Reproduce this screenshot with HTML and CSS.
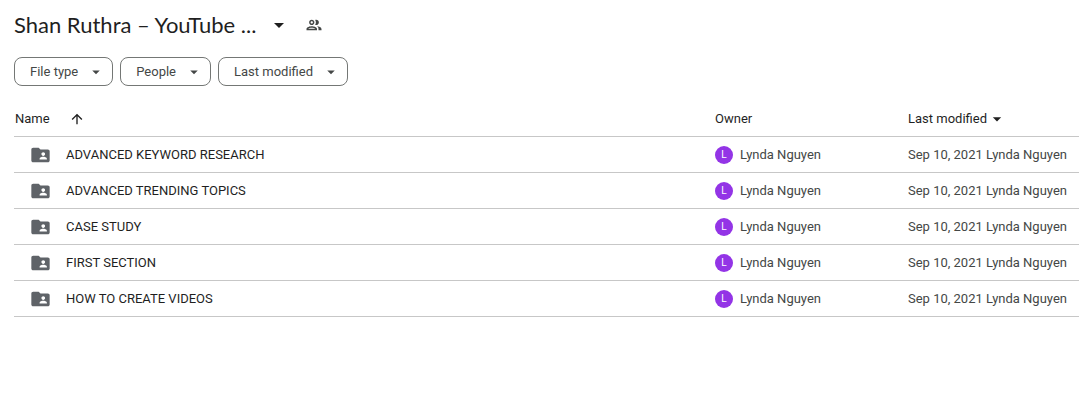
FILE: index.html
```
<!DOCTYPE html>
<html lang="en">
<head>
    <meta charset="UTF-8">
    <meta name="viewport" content="width=device-width, initial-scale=1.0">
    <title>Shan Ruthra – YouTube ...</title>
    <link rel="stylesheet" href="styles.css">
</head>
<body>
    <!-- Shared icons -->
    <svg class="sprite" aria-hidden="true">
        <symbol id="icon-caret" viewBox="0 0 24 24"><path d="M7 10l5 5 5-5z"/></symbol>
        <symbol id="icon-people" viewBox="0 0 24 24"><path d="M9 13.75c-2.34 0-7 1.17-7 3.5V19h14v-1.75c0-2.33-4.66-3.5-7-3.5zM4.34 17c.84-.58 2.87-1.25 4.66-1.25s3.82.67 4.66 1.25H4.34zM9 12c1.93 0 3.5-1.57 3.5-3.5S10.93 5 9 5 5.5 6.57 5.5 8.5 7.07 12 9 12zm0-5c.83 0 1.5.67 1.5 1.5S9.83 10 9 10s-1.5-.67-1.5-1.5S8.17 7 9 7zm7.04 6.81c1.16.84 1.96 1.96 1.96 3.44V19h4v-1.75c0-2.02-3.5-3.17-5.96-3.44zM15 12c1.93 0 3.5-1.57 3.5-3.5S16.93 5 15 5c-.54 0-1.04.13-1.5.35.63.89 1 1.98 1 3.15s-.37 2.26-1 3.15c.46.22.96.35 1.5.35z"/></symbol>
        <symbol id="icon-arrow-up" viewBox="0 0 24 24"><path d="M4 12l1.41 1.41L11 7.83V20h2V7.83l5.58 5.59L20 12l-8-8-8 8z"/></symbol>
        <symbol id="icon-folder" viewBox="0 0 24 24"><path d="M20 6h-8l-2-2H4c-1.1 0-1.99.9-1.99 2L2 18c0 1.1.9 2 2 2h16c1.1 0 2-.9 2-2V8c0-1.1-.9-2-2-2zm-5 3c1.1 0 2 .9 2 2s-.9 2-2 2-2-.9-2-2 .9-2 2-2zm4 8h-8v-1c0-1.33 2.67-2 4-2s4 .67 4 2v1z"/></symbol>
    </svg>

    <header class="title-bar">
        <h1>Shan Ruthra – YouTube ...</h1>
        <button class="icon-button" aria-label="Folder actions"><svg class="icon icon-large"><use href="#icon-caret"/></svg></button>
        <button class="icon-button" aria-label="Manage access"><svg class="icon icon-muted"><use href="#icon-people"/></svg></button>
    </header>

    <div class="filters">
        <button class="chip">File type <svg class="icon"><use href="#icon-caret"/></svg></button>
        <button class="chip">People <svg class="icon"><use href="#icon-caret"/></svg></button>
        <button class="chip">Last modified <svg class="icon"><use href="#icon-caret"/></svg></button>
    </div>

    <table class="files">
        <thead>
            <tr>
                <th class="col-name"><div class="heading">Name <button class="icon-button sort" aria-label="Reverse sort direction"><svg class="icon icon-small"><use href="#icon-arrow-up"/></svg></button></div></th>
                <th class="col-owner">Owner</th>
                <th class="col-modified"><button class="heading">Last modified <svg class="icon modified-caret"><use href="#icon-caret"/></svg></button></th>
            </tr>
        </thead>
        <tbody>
            <tr>
                <td><div class="file"><svg class="icon folder"><use href="#icon-folder"/></svg>ADVANCED KEYWORD RESEARCH</div></td>
                <td><div class="owner"><span class="avatar">L</span>Lynda Nguyen</div></td>
                <td>Sep 10, 2021 Lynda Nguyen</td>
            </tr>
            <tr>
                <td><div class="file"><svg class="icon folder"><use href="#icon-folder"/></svg>ADVANCED TRENDING TOPICS</div></td>
                <td><div class="owner"><span class="avatar">L</span>Lynda Nguyen</div></td>
                <td>Sep 10, 2021 Lynda Nguyen</td>
            </tr>
            <tr>
                <td><div class="file"><svg class="icon folder"><use href="#icon-folder"/></svg>CASE STUDY</div></td>
                <td><div class="owner"><span class="avatar">L</span>Lynda Nguyen</div></td>
                <td>Sep 10, 2021 Lynda Nguyen</td>
            </tr>
            <tr>
                <td><div class="file"><svg class="icon folder"><use href="#icon-folder"/></svg>FIRST SECTION</div></td>
                <td><div class="owner"><span class="avatar">L</span>Lynda Nguyen</div></td>
                <td>Sep 10, 2021 Lynda Nguyen</td>
            </tr>
            <tr>
                <td><div class="file"><svg class="icon folder"><use href="#icon-folder"/></svg>HOW TO CREATE VIDEOS</div></td>
                <td><div class="owner"><span class="avatar">L</span>Lynda Nguyen</div></td>
                <td>Sep 10, 2021 Lynda Nguyen</td>
            </tr>
        </tbody>
    </table>
</body>
</html>
```
FILE: styles.css
```
* {
    box-sizing: border-box;
}
body {
    margin: 0;
    padding: 10px 0 0 14px;
    font-family: Roboto, sans-serif;
    font-size: 13px;
    line-height: 20px;
    color: #1f1f1f;
    background: #fff;
}
button {
    padding: 0;
    border: 0;
    background: none;
    color: inherit;
    font: inherit;
    cursor: pointer;
}
.sprite {
    display: none;
}
.icon {
    display: block;
    flex: none;
    width: 18px;
    height: 18px;
    fill: currentColor;
}
.icon-small {
    width: 16px;
    height: 16px;
}
.icon-large {
    width: 24px;
    height: 24px;
}
.icon-muted {
    color: #444746;
}
.title-bar {
    display: flex;
    align-items: center;
    height: 30px;
}
.title-bar h1 {
    margin: 0 11px 0 0;
    font-family: Lato, sans-serif;
    font-size: 22px;
    line-height: 28px;
    font-weight: 400;
}
.title-bar .icon-button + .icon-button {
    margin-left: 14px;
}
.filters {
    display: flex;
    gap: 7px;
    margin-top: 17px;
}
.chip {
    display: flex;
    align-items: center;
    gap: 9px;
    height: 29px;
    padding: 0 7px 0 15px;
    border: 1px solid #747775;
    border-radius: 8px;
    color: #444746;
}
.files {
    width: 100%;
    margin-top: 14px;
    border-collapse: collapse;
    table-layout: fixed;
}
.files th,
.files td {
    height: 36px;
    padding: 1px 0 0 1px;
    border-bottom: 1px solid #c7c7c7;
    text-align: left;
    white-space: nowrap;
}
.files th {
    padding-top: 2px;
    font-weight: 400;
}
.files td {
    color: #444746;
}
.col-owner {
    width: 193px;
}
.col-modified {
    width: 172px;
}
.heading {
    display: flex;
    align-items: center;
}
.sort {
    margin-left: 19px;
}
.modified-caret {
    width: 20px;
    height: 20px;
}
.file {
    display: flex;
    align-items: center;
    gap: 14px;
    padding-left: 14px;
    color: #1f1f1f;
}
.folder {
    width: 23px;
    height: 22px;
    color: #5f6368;
}
.owner {
    display: flex;
    align-items: center;
    gap: 7px;
}
.avatar {
    width: 18px;
    height: 18px;
    border-radius: 50%;
    background: #9334e6;
    color: #fff;
    font-size: 10px;
    line-height: 18px;
    text-align: center;
}
```
